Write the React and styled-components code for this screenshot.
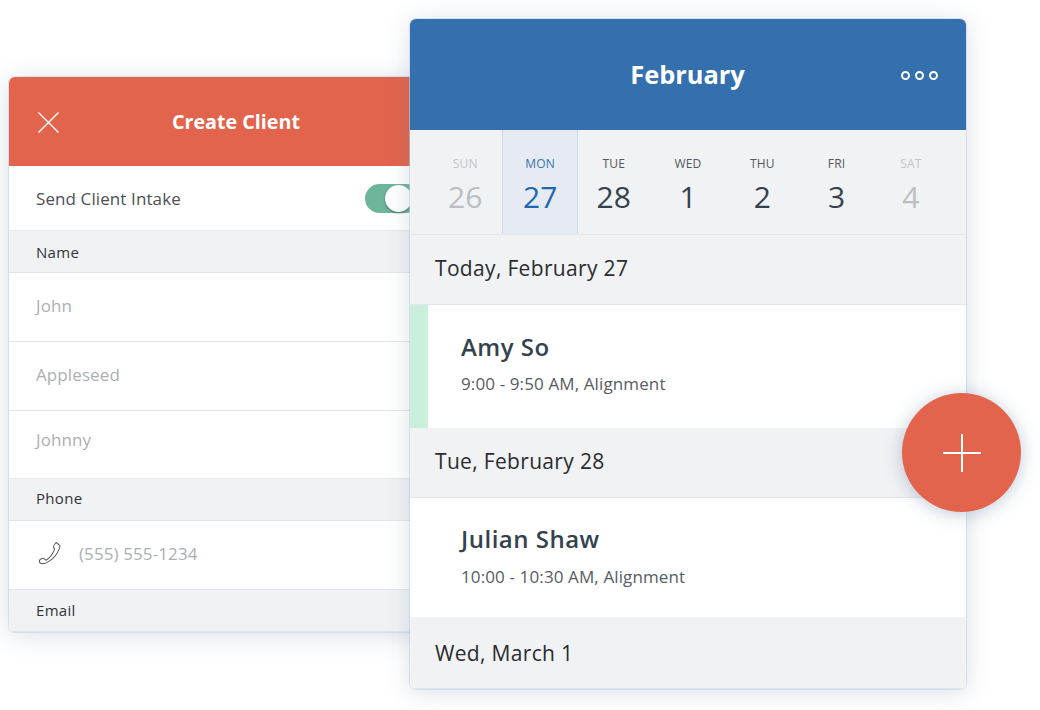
import React from "react";
import styled, { createGlobalStyle } from "styled-components";

const Global = createGlobalStyle`
  html, body { margin: 0; padding: 0; background: #fff; }
  body { font-family: "Open Sans", "Liberation Sans", sans-serif; -webkit-font-smoothing: antialiased; }
`;

const Stage = styled.div`
  position: relative;
  width: 1040px;
  height: 710px;
  overflow: hidden;
  background: #fff;
`;

const Card = styled.div`
  position: absolute;
  left: ${(p) => p.$x}px;
  top: ${(p) => p.$y}px;
  width: ${(p) => p.$w}px;
  height: ${(p) => p.$h}px;
  z-index: ${(p) => p.$z};
  display: flex;
  flex-direction: column;
  background: #fff;
  border-radius: 6px;
  overflow: hidden;
`;

const Shadow = styled.div`
  position: absolute;
  left: ${(p) => p.$x}px;
  top: ${(p) => p.$y}px;
  width: ${(p) => p.$w}px;
  height: ${(p) => p.$h}px;
  z-index: ${(p) => p.$z};
  border-radius: 6px;
  box-shadow: 0 0 0 1px rgba(190, 212, 232, 0.55), 0 3px 24px rgba(90, 115, 150, 0.24);
`;

const FormHeader = styled.header`
  height: 89px;
  flex: none;
  display: flex;
  align-items: center;
  position: relative;
  background: #e3644c;
  color: #fff;
`;

const CloseIcon = styled.svg`
  margin-left: 29px;
  margin-top: 1px;
  width: 21px;
  height: 21px;
`;

const FormTitle = styled.h1`
  position: absolute;
  left: 163px;
  top: 31px;
  margin: 0;
  font-size: 19.7px;
  line-height: 27px;
  font-weight: 700;
`;

const SwitchRow = styled.div`
  height: 64px;
  flex: none;
  display: flex;
  align-items: center;
  padding-left: 27px;
  font-size: 17px;
  letter-spacing: 0.1px;
  color: #4b4f53;
`;

const Toggle = styled.div`
  margin-left: 184px;
  width: 56px;
  height: 29px;
  border-radius: 15px;
  background: #6db69a;
  position: relative;
  flex: none;
`;

const Knob = styled.div`
  position: absolute;
  left: 20px;
  top: 1px;
  width: 27px;
  height: 27px;
  border-radius: 50%;
  background: #fff;
  box-shadow: 0 1px 2px rgba(40, 70, 60, 0.7);
`;

const FieldLabel = styled.div`
  height: 43px;
  flex: none;
  display: flex;
  align-items: center;
  padding-left: 27px;
  padding-bottom: ${(p) => p.$lift || 0}px;
  box-sizing: border-box;
  background: #f1f2f4;
  border-top: 1px solid #e6e7ea;
  border-bottom: 1px solid #e3e5e8;
  font-size: 15px;
  letter-spacing: 0.3px;
  color: #303336;
`;

const Field = styled.div`
  height: ${(p) => p.$h}px;
  flex: none;
  display: flex;
  align-items: center;
  padding-left: 27px;
  padding-bottom: ${(p) => p.$lift}px;
  box-sizing: border-box;
  gap: 17px;
  border-bottom: ${(p) => (p.$line ? "1px solid #e6e7ea" : "none")};
  font-size: 17px;
  letter-spacing: 0.1px;
  color: #acafb2;
`;

const PhoneIcon = styled.svg`
  margin-left: 2px;
  width: 24px;
  height: 24px;
  flex: none;
`;

const CalHeader = styled.header`
  height: 111px;
  flex: none;
  display: flex;
  align-items: center;
  justify-content: center;
  position: relative;
  background: #3470ad;
  color: #fff;
`;

const CalTitle = styled.h2`
  margin: 0 1px 2px 0;
  font-size: 25.4px;
  line-height: 34px;
  font-weight: 700;
`;

const Dots = styled.div`
  position: absolute;
  left: 491px;
  top: 52px;
  display: flex;
  gap: 5px;
`;

const Dot = styled.span`
  width: 9px;
  height: 9px;
  box-sizing: border-box;
  border: 2.4px solid #fff;
  border-radius: 50%;
`;

const Week = styled.div`
  height: 105px;
  flex: none;
  box-sizing: border-box;
  display: grid;
  grid-template-columns: repeat(7, 1fr);
  padding: 0 18px;
  background: #f1f2f4;
  border-bottom: 1px solid #e4e6e9;
`;

const Day = styled.div`
  display: flex;
  flex-direction: column;
  align-items: center;
  padding-top: 25px;
  margin-right: ${(p) => (p.$active ? -1.5 : 0)}px;
  box-sizing: border-box;
  background: ${(p) => (p.$active ? "#e6ebf3" : "transparent")};
  box-shadow: ${(p) => (p.$active ? "inset 1px 0 #cbd8e6, inset -1px 0 #cbd8e6" : "none")};
  color: ${(p) => (p.$active ? "#1e68ab" : p.$muted ? "#bcbec1" : "#33424e")};
`;

const DayName = styled.span`
  font-size: 12px;
  line-height: 17px;
  letter-spacing: 0.2px;
  color: ${(p) => (p.$active ? "#3a74ad" : p.$muted ? "#c3c5c8" : "#55585c")};
`;

const DayNum = styled.span`
  margin-top: 4px;
  font-size: 30px;
  line-height: 41px;
`;

const DateRow = styled.div`
  height: ${(p) => p.$h}px;
  flex: none;
  box-sizing: border-box;
  display: flex;
  align-items: center;
  padding-left: 25px;
  padding-bottom: ${(p) => p.$lift || 0}px;
  background: #f1f2f4;
  border-bottom: 1px solid #e3e5e8;
  font-size: 21px;
  letter-spacing: 0.33px;
  color: #2a2c2f;
`;

const Appointment = styled.div`
  height: ${(p) => p.$h}px;
  flex: none;
  box-sizing: border-box;
  display: flex;
  flex-direction: column;
  justify-content: center;
  padding-left: ${(p) => (p.$accent ? 33 : 51)}px;
  padding-bottom: ${(p) => (p.$accent ? 8 : 4)}px;
  background: #fff;
  border-left: ${(p) => (p.$accent ? "18px solid #c9f0dd" : "none")};
`;

const Client = styled.div`
  font-size: 24px;
  line-height: 31px;
  font-weight: 600;
  letter-spacing: 0.5px;
  color: #33424e;
`;

const Detail = styled.div`
  margin-top: ${(p) => p.$gap}px;
  font-size: 17px;
  line-height: 23px;
  letter-spacing: 0.12px;
  color: #565c62;
`;

const Fab = styled.button`
  position: absolute;
  left: 902px;
  top: 393px;
  width: 119px;
  height: 119px;
  padding: 0;
  border: 0;
  border-radius: 50%;
  background: #e3644c;
  box-shadow: 0 2px 18px rgba(90, 115, 150, 0.38);
  z-index: 5;
  display: flex;
  align-items: center;
  justify-content: center;
`;

const days = [
  ["SUN", 26, "muted"],
  ["MON", 27, "active"],
  ["TUE", 28],
  ["WED", 1],
  ["THU", 2],
  ["FRI", 3],
  ["SAT", 4, "muted"],
];

export default function App() {
  return (
    <Stage>
      <Global />
      <Shadow $x={9} $y={77} $w={420} $h={555} $z={1} />
      <Card $x={9} $y={77} $w={420} $h={555} $z={1}>
        <FormHeader>
          <CloseIcon viewBox="0 0 21 21" fill="none" stroke="#fff" strokeWidth="1.4">
            <path d="M0.5 0.5 L20.5 20.5 M20.5 0.5 L0.5 20.5" />
          </CloseIcon>
          <FormTitle>Create Client</FormTitle>
        </FormHeader>
        <SwitchRow>
          Send Client Intake
          <Toggle>
            <Knob />
          </Toggle>
        </SwitchRow>
        <FieldLabel>Name</FieldLabel>
        <Field $h={69} $line $lift={4}>John</Field>
        <Field $h={69} $line $lift={4}>Appleseed</Field>
        <Field $h={67} $lift={11}>Johnny</Field>
        <FieldLabel $lift={4}>Phone</FieldLabel>
        <Field $h={68} $lift={4}>
          <PhoneIcon viewBox="0 0 26 26" fill="none" stroke="#55585c" strokeWidth="1.1" strokeLinejoin="round">
            <path d="M19.6 1.6 L23.2 4.4 C24 5 24 6 23.4 7.4 C21.6 12.4 17.4 18.6 12.2 21.8 C9.8 23.4 7 24.6 4.8 24.6 C3.2 24.6 1.6 23.6 1.4 22.2 C1.2 21 2.2 19.8 3.4 19.2 C4.4 18.8 5.4 18.6 6 18.8 L8.6 20.8 C12.6 18.4 16.4 13.2 18 8.8 L16.8 6.8 C16.4 5.8 17.4 4.2 19.6 1.6 Z" />
          </PhoneIcon>
          (555) 555-1234
        </Field>
        <FieldLabel $lift={2}>Email</FieldLabel>
      </Card>

      <Shadow $x={410} $y={19} $w={556} $h={670} $z={2} />
      <Card $x={410} $y={19} $w={556} $h={670} $z={3}>
        <CalHeader>
          <CalTitle>February</CalTitle>
          <Dots>
            <Dot />
            <Dot />
            <Dot />
          </Dots>
        </CalHeader>
        <Week>
          {days.map(([name, num, state]) => (
            <Day key={name} $active={state === "active"} $muted={state === "muted"}>
              <DayName $active={state === "active"} $muted={state === "muted"}>{name}</DayName>
              <DayNum>{num}</DayNum>
            </Day>
          ))}
        </Week>
        <DateRow $h={70} $lift={4}>Today, February 27</DateRow>
        <Appointment $h={123} $accent>
          <Client>Amy So</Client>
          <Detail $gap={10}>9:00 - 9:50 AM, Alignment</Detail>
        </Appointment>
        <DateRow $h={70} $lift={4}>Tue, February 28</DateRow>
        <Appointment $h={119}>
          <Client>Julian Shaw</Client>
          <Detail $gap={11}>10:00 - 10:30 AM, Alignment</Detail>
        </Appointment>
        <DateRow $h={72}>Wed, March 1</DateRow>
      </Card>

      <Fab aria-label="Add">
        <svg width="38" height="38" viewBox="0 0 38 38" fill="none" stroke="#fff" strokeWidth="2">
          <path d="M19 0 V38 M0 19 H38" />
        </svg>
      </Fab>
    </Stage>
  );
}
